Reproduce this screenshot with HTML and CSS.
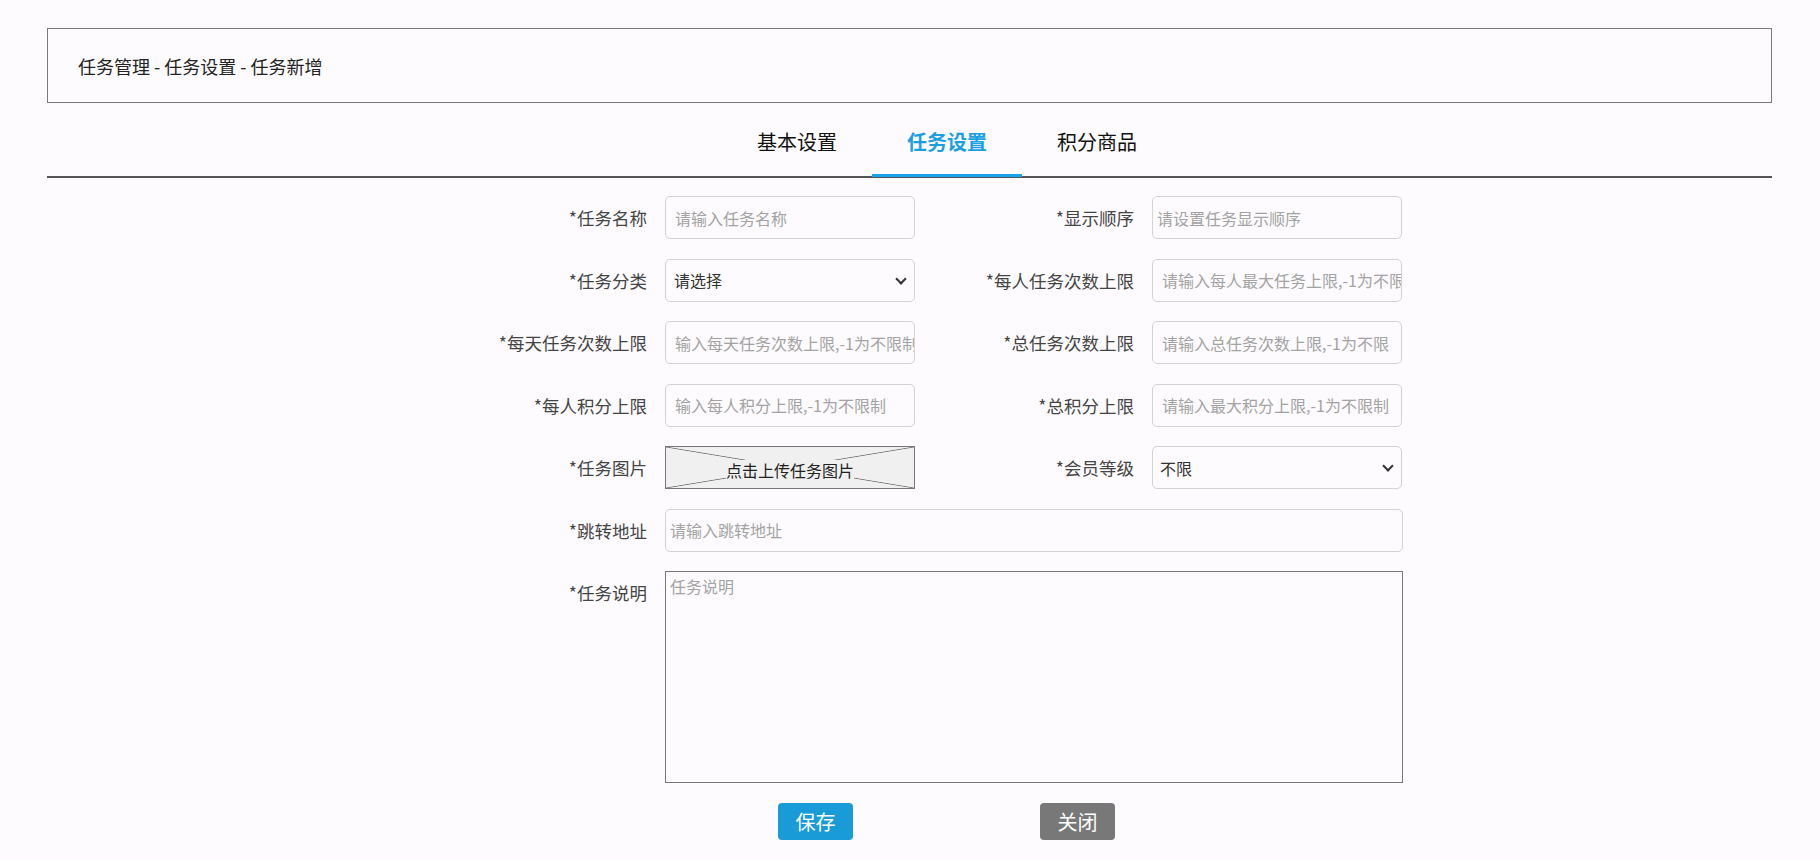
FILE: index.html
```html
<!DOCTYPE html>
<html lang="zh-CN">
<head>
<meta charset="utf-8">
<title>任务新增</title>
<link rel="stylesheet" href="styles.css">
</head>
<body>
<div class="page">
  <div class="crumb">任务管理 - 任务设置 - 任务新增</div>
  <div class="tabs">
    <div class="tab">基本设置</div>
    <div class="tab active">任务设置</div>
    <div class="tab">积分商品</div>
  </div>
  <form class="form">
    <div class="row">
      <div class="field"><label class="lbl">*任务名称</label><input class="inp" placeholder="请输入任务名称"></div>
      <div class="field"><label class="lbl">*显示顺序</label><input class="inp pad-s" placeholder="请设置任务显示顺序"></div>
    </div>
    <div class="row">
      <div class="field"><label class="lbl">*任务分类</label><span class="sel-wrap"><select class="inp sel"><option>请选择</option></select></span></div>
      <div class="field"><label class="lbl">*每人任务次数上限</label><input class="inp" placeholder="请输入每人最大任务上限,-1为不限制"></div>
    </div>
    <div class="row">
      <div class="field"><label class="lbl">*每天任务次数上限</label><input class="inp" placeholder="输入每天任务次数上限,-1为不限制"></div>
      <div class="field"><label class="lbl">*总任务次数上限</label><input class="inp" placeholder="请输入总任务次数上限,-1为不限"></div>
    </div>
    <div class="row">
      <div class="field"><label class="lbl">*每人积分上限</label><input class="inp" placeholder="输入每人积分上限,-1为不限制"></div>
      <div class="field"><label class="lbl">*总积分上限</label><input class="inp" placeholder="请输入最大积分上限,-1为不限制"></div>
    </div>
    <div class="row">
      <div class="field"><label class="lbl">*任务图片</label><div class="upload"><span class="upload-text">点击上传任务图片</span></div></div>
      <div class="field"><label class="lbl">*会员等级</label><span class="sel-wrap"><select class="inp sel sel-s"><option>不限</option></select></span></div>
    </div>
    <div class="row">
      <div class="field"><label class="lbl">*跳转地址</label><input class="inp wide pad-s" placeholder="请输入跳转地址"></div>
    </div>
    <div class="row">
      <div class="field"><label class="lbl">*任务说明</label><textarea class="area" placeholder="任务说明"></textarea></div>
    </div>
    <div class="actions">
      <button type="button" class="btn btn-save">保存</button>
      <button type="button" class="btn btn-close">关闭</button>
    </div>
  </form>
</div>
</body>
</html>
```

FILE: styles.css
```css
html, body {
  margin: 0;
  padding: 0;
  background: #fdfbfd;
}

body {
  font-family: "Noto Sans CJK SC", "Noto Sans", "Liberation Sans", sans-serif;
  color: #333;
}

.page {
  padding: 28px 48px 0 47px;
}

.crumb {
  box-sizing: border-box;
  height: 75px;
  border: 1px solid #7a7a7a;
  padding-left: 30px;
  display: flex;
  align-items: center;
  font-size: 18px;
  color: #222;
}

.tabs {
  display: flex;
  padding-left: 675px;
  border-bottom: 2px solid #555;
}

.tab {
  width: 150px;
  text-align: center;
  font-size: 20px;
  line-height: 30px;
  padding: 24px 0 17px;
  border-bottom: 3px solid transparent;
  margin-bottom: -1px;
  color: #111;
}

.tab.active {
  color: #1a9fe3;
  font-weight: bold;
  border-bottom-color: #1aa3ea;
}

.form {
  margin: 0 0 0 450px;
  padding-top: 18px;
  display: flex;
  flex-direction: column;
  gap: 19.5px;
}

.row {
  display: flex;
  gap: 69px;
}

.field {
  display: flex;
  gap: 18px;
  align-items: flex-start;
}

.lbl {
  width: 150px;
  text-align: right;
  line-height: 43px;
  font-size: 17.5px;
  color: #444;
  white-space: nowrap;
}

.inp {
  box-sizing: border-box;
  width: 250px;
  height: 43px;
  margin: 0;
  border: 1px solid #d3d3d3;
  border-radius: 5px;
  padding: 0 0 0 9px;
  font-family: inherit;
  font-size: 16px;
  color: #333;
  background: transparent;
  outline: none;
}

.inp::placeholder,
.area::placeholder {
  color: #a3a3a3;
  opacity: 1;
}

.pad-s {
  padding-left: 4px;
}

.wide {
  width: 738px;
}

.sel-wrap {
  position: relative;
  display: block;
}

.sel {
  appearance: none;
  -webkit-appearance: none;
  display: block;
  padding-left: 8px;
}

.sel-s {
  padding-left: 7px;
}

.sel-wrap::after {
  content: "";
  position: absolute;
  right: 10px;
  top: 16px;
  width: 6px;
  height: 6px;
  border-right: 2px solid #333;
  border-bottom: 2px solid #333;
  transform: rotate(45deg);
  pointer-events: none;
}

.upload {
  box-sizing: border-box;
  width: 250px;
  height: 43px;
  border: 1px solid #777;
  background:
    linear-gradient(to top right, transparent calc(50% - 0.8px), #777 50%, transparent calc(50% + 0.8px)),
    linear-gradient(to bottom right, transparent calc(50% - 0.8px), #777 50%, transparent calc(50% + 0.8px)),
    #f0f0f0;
  display: flex;
  align-items: center;
  justify-content: center;
  padding-top: 4px;
}

.upload-text {
  background: #f0f0f0;
  font-size: 16px;
  line-height: 20px;
  color: #222;
}

.area {
  box-sizing: border-box;
  width: 738px;
  height: 212px;
  margin: 0;
  border: 1px solid #777;
  border-radius: 0;
  padding: 2px 4px;
  font-family: inherit;
  font-size: 16px;
  line-height: 24px;
  background: transparent;
  resize: none;
  outline: none;
}

.actions {
  display: flex;
  gap: 187px;
  padding-left: 281px;
}

.btn {
  width: 75px;
  height: 37px;
  border: none;
  border-radius: 4px;
  font-family: inherit;
  font-size: 20px;
  color: #fff;
  padding: 0;
  cursor: pointer;
}

.btn-save {
  background: #189bd7;
}

.btn-close {
  background: #787878;
}
```
